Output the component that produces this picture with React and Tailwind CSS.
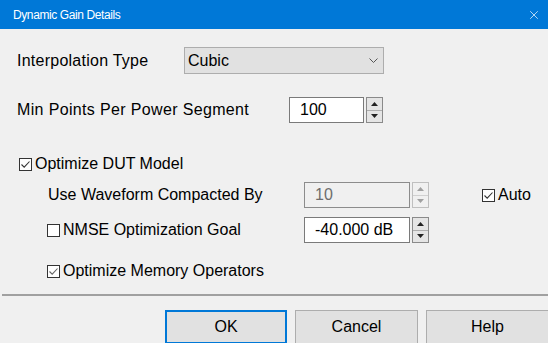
import { X } from "lucide-react";

const font = { fontFamily: '"Liberation Sans", Arial, sans-serif' };

const CheckBox = ({ checked, dim }) => (
  <span className="flex h-[13px] w-[13px] shrink-0 items-center justify-center border border-[#333333] bg-white">
    {checked && (
      <svg width="11" height="11" viewBox="0 0 11 11">
        <path
          d="M1.5 5.5 L4.2 8.2 L9.5 2.5"
          fill="none"
          stroke={dim ? "#666666" : "#333333"}
          strokeWidth="1.1"
        />
      </svg>
    )}
  </span>
);

const SpinArrow = ({ up, disabled }) => (
  <svg width="7" height="4" viewBox="0 0 7 4">
    <path
      d={up ? "M0 4 L3.5 0 L7 4 Z" : "M0 0 L3.5 4 L7 0 Z"}
      fill={disabled ? "#a0a0a0" : "#222222"}
    />
  </svg>
);

const Spinner = ({ value, disabled, width = "w-[75px]" }) => (
  <div className="flex h-[26px] items-stretch">
    <div
      className={[
        "flex items-center border pl-[10px]",
        width,
        disabled
          ? "border-[#8c8c8c] bg-[#f0f0f0] text-[#6d6d6d]"
          : "border-[#7a7a7a] bg-white text-black",
      ].join(" ")}
    >
      {value}
    </div>
    <div
      className={[
        "ml-[2px] flex w-[17px] flex-col border",
        disabled ? "border-[#bfbfbf]" : "border-[#8a8a8a]",
      ].join(" ")}
    >
      <div
        className={[
          "flex flex-1 items-center justify-center border-b",
          disabled ? "border-[#d0d0d0] bg-[#f0f0f0]" : "border-[#adadad] bg-[#e5e5e5]",
        ].join(" ")}
      >
        <SpinArrow up disabled={disabled} />
      </div>
      <div
        className={[
          "flex flex-1 items-center justify-center",
          disabled ? "bg-[#f0f0f0]" : "bg-[#e5e5e5]",
        ].join(" ")}
      >
        <SpinArrow disabled={disabled} />
      </div>
    </div>
  </div>
);

const DialogButton = ({ label, primary, width }) => (
  <button
    type="button"
    className={[
      "flex h-[34px] shrink-0 items-center justify-center bg-[#e1e1e1] text-black",
      width,
      primary ? "border-2 border-[#0078d7]" : "border border-[#adadad]",
    ].join(" ")}
  >
    {label}
  </button>
);

export default function App() {
  return (
    <div className="h-[343px] w-[548px] overflow-hidden bg-[#f0f0f0] text-black" style={font}>
      <div className="flex h-[29px] items-center justify-between bg-[#0078d7] pl-[13px] pr-[7px] text-white">
        <span className="text-[12px] tracking-[-0.4px]">Dynamic Gain Details</span>
        <X size={14} strokeWidth={1.2} className="text-white" />
      </div>

      <div className="flex flex-col text-[16px]">
        <div className="mt-[18px] flex h-[27px] items-center pl-[17px]">
          <span className="w-[167px] tracking-[0.25px]">Interpolation Type</span>
          <div className="flex h-[27px] w-[200px] items-center justify-between border border-[#adadad] bg-[#e1e1e1] pl-[3px] pr-[5px]">
            <span>Cubic</span>
            <svg width="9" height="5" viewBox="0 0 9 5">
              <path d="M0.5 0.5 L4.5 4.5 L8.5 0.5" fill="none" stroke="#555555" strokeWidth="1" />
            </svg>
          </div>
        </div>

        <div className="mt-[23px] flex h-[26px] items-center pl-[17px]">
          <span className="w-[272px] tracking-[0.35px]">Min Points Per Power Segment</span>
          <Spinner value="100" />
        </div>

        <div className="mt-[33px] flex h-[16px] items-center gap-[3px] pl-[19px]">
          <CheckBox checked />
          <span>Optimize DUT Model</span>
        </div>

        <div className="mt-[10px] flex h-[26px] items-center pl-[48px]">
          <span className="w-[256px]">Use Waveform Compacted By</span>
          <Spinner value="10" disabled width="w-[106px]" />
          <div className="ml-[53px] flex items-center gap-[3px]">
            <CheckBox checked />
            <span>Auto</span>
          </div>
        </div>

        <div className="mt-[9px] flex h-[26px] items-center pl-[47px]">
          <CheckBox />
          <span className="ml-[3px] w-[241px]">NMSE Optimization Goal</span>
          <Spinner value="-40.000 dB" width="w-[106px]" />
        </div>

        <div className="mt-[20px] flex h-[16px] items-center gap-[3px] pl-[47px]">
          <CheckBox checked dim />
          <span>Optimize Memory Operators</span>
        </div>

        <div className="ml-[2px] mt-[15px] h-[2px] bg-[#a0a0a0]" />

        <div className="mt-[14px] flex gap-[8px] pl-[165px]">
          <DialogButton label="OK" primary width="w-[122px]" />
          <DialogButton label="Cancel" width="w-[123px]" />
          <DialogButton label="Help" width="w-[123px]" />
        </div>
      </div>
    </div>
  );
}
